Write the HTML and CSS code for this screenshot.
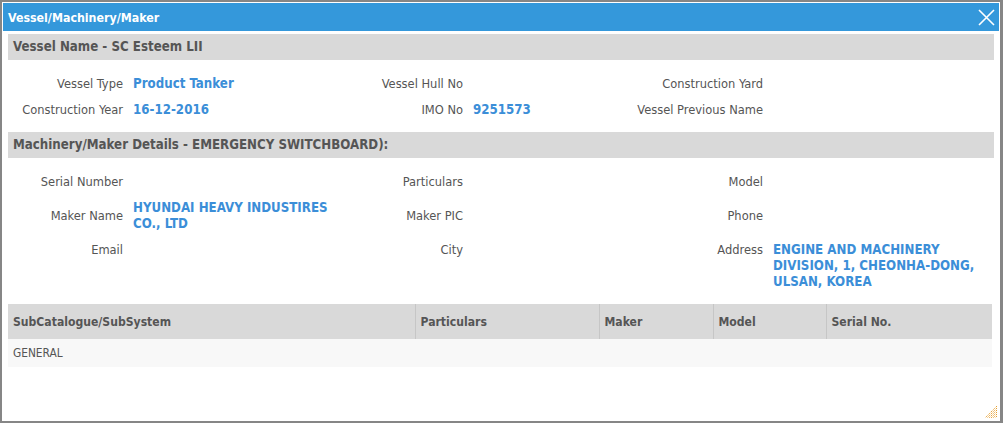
FILE: index.html
```html
<!DOCTYPE html>
<html>
<head>
<meta charset="utf-8">
<link rel="stylesheet" href="styles.css">
</head>
<body>
<div class="window">
  <div class="titlebar">
    <span class="title">Vessel/Machinery/Maker</span>
    <svg class="close" width="17" height="17" viewBox="0 0 17 17"><path d="M1 1 L16 16 M16 1 L1 16" stroke="#fff" stroke-width="1.6" fill="none"/></svg>
  </div>
  <div class="content">
    <div class="section-head">Vessel Name - SC Esteem LII</div>
    <div class="info">
      <div class="lbl">Vessel Type</div><div class="val">Product Tanker</div>
      <div class="lbl">Vessel Hull No</div><div class="val"></div>
      <div class="lbl">Construction Yard</div><div class="val"></div>
      <div class="lbl">Construction Year</div><div class="val">16-12-2016</div>
      <div class="lbl">IMO No</div><div class="val">9251573</div>
      <div class="lbl">Vessel Previous Name</div><div class="val"></div>
    </div>
    <div class="section-head">Machinery/Maker Details - EMERGENCY SWITCHBOARD):</div>
    <div class="info">
      <div class="lbl">Serial Number</div><div class="val"></div>
      <div class="lbl">Particulars</div><div class="val"></div>
      <div class="lbl">Model</div><div class="val"></div>
      <div class="lbl mid">Maker Name</div><div class="val">HYUNDAI HEAVY INDUSTIRES CO., LTD</div>
      <div class="lbl mid">Maker PIC</div><div class="val"></div>
      <div class="lbl mid">Phone</div><div class="val"></div>
      <div class="lbl">Email</div><div class="val"></div>
      <div class="lbl">City</div><div class="val"></div>
      <div class="lbl">Address</div><div class="val">ENGINE AND MACHINERY DIVISION, 1, CHEONHA-DONG, ULSAN, KOREA</div>
    </div>
    <table class="grid">
      <colgroup>
        <col class="c1"><col class="c2"><col class="c3"><col class="c4"><col class="c5">
      </colgroup>
      <thead>
        <tr><th>SubCatalogue/SubSystem</th><th>Particulars</th><th>Maker</th><th>Model</th><th>Serial No.</th></tr>
      </thead>
      <tbody>
        <tr><td>GENERAL</td><td></td><td></td><td></td><td></td></tr>
      </tbody>
    </table>
  </div>
  <svg class="grip" width="13" height="13" viewBox="0 0 13 13">
    <path d="M12 2 L2 12 M12 6 L6 12 M12 10 L10 12 M12 0 L0 12 M12 4 L4 12 M12 8 L8 12" stroke="#e8a030" stroke-width="1" stroke-dasharray="1.4 1" fill="none"/>
  </svg>
</div>
</body>
</html>
```

FILE: styles.css
```css
html, body {
  margin: 0;
  padding: 0;
  background: #fff;
}
body {
  font-family: "DejaVu Sans Condensed", "DejaVu Sans", sans-serif;
  font-size: 12.75px;
  color: #555;
}
.window {
  position: relative;
  box-sizing: border-box;
  width: 1003px;
  height: 423px;
  border-top: 2px solid #868686;
  border-left: 2px solid #868686;
  border-right: 3px solid #868686;
  border-bottom: 2px solid #868686;
  padding: 1px 1px 0 1px;
  background: #fff;
}
.titlebar {
  display: flex;
  align-items: center;
  justify-content: space-between;
  height: 28px;
  background: #3498db;
  padding: 0 4px 0 5px;
}
.title {
  color: #fff;
  font-weight: bold;
  font-size: 12.3px;
  padding-top: 2px;
}
.close {
  display: block;
  margin-top: 1px;
}
.content {
  padding: 3px 5px 0 5px;
}
.section-head {
  height: 26px;
  line-height: 26px;
  background: #d9d9d9;
  padding-left: 5px;
  font-weight: bold;
  font-size: 13.2px;
  color: #555;
}
.info {
  display: grid;
  grid-template-columns: 115px 205px 115px 150px 130px 1fr;
  column-gap: 10px;
  row-gap: 10px;
  padding: 16px 0 14px;
  line-height: 16px;
}
.lbl {
  text-align: right;
  color: #555;
  white-space: nowrap;
}
.lbl.mid {
  align-self: center;
}
.val {
  color: #3b8ed8;
  font-weight: bold;
  font-size: 13.2px;
}
.grid {
  width: 984px;
  border-collapse: collapse;
  table-layout: fixed;
}
.c1 { width: 407px; }
.c2 { width: 184px; }
.c3 { width: 114px; }
.c4 { width: 113px; }
.c5 { width: 166px; }
.grid th {
  height: 34px;
  padding: 1px 5px 0;
  text-align: left;
  background: #d9d9d9;
  font-weight: bold;
  font-size: 12.1px;
  color: #555;
  border-left: 1px solid #c6c6c6;
}
.grid th:first-child {
  border-left: none;
}
.grid td {
  height: 28px;
  padding: 0 5px;
  background: #f8f8f8;
  color: #555;
  font-size: 11.8px;
}
.grip {
  position: absolute;
  right: 2px;
  bottom: 2px;
}
```
